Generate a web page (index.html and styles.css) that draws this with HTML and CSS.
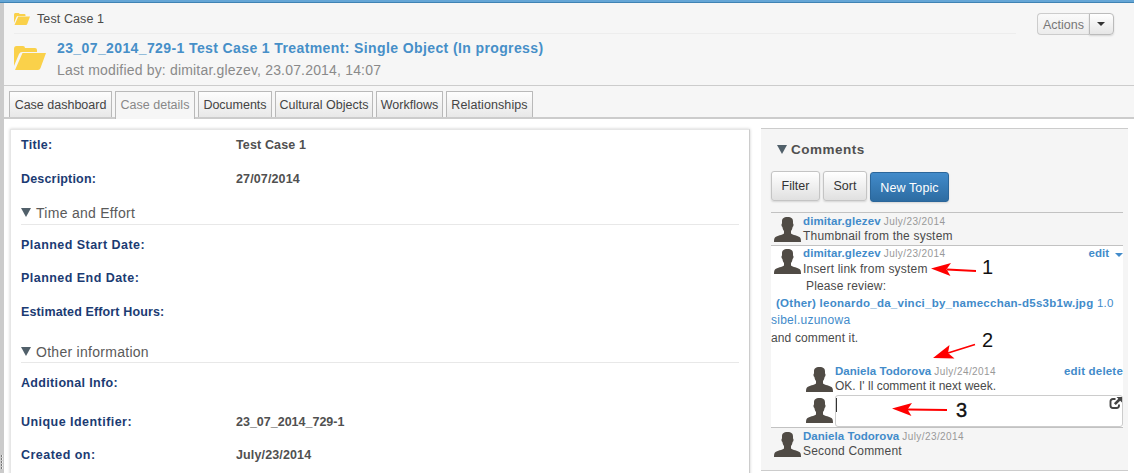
FILE: index.html
```html
<!DOCTYPE html>
<html lang="en"><head><meta charset="utf-8"><title>Test Case 1</title><link rel="stylesheet" href="styles.css"></head>
<body>
<svg class="defs" width="0" height="0"><defs>
<symbol id="person" viewBox="0 0 27 25"><path d="M13.500 0C17.500 0 19 1.500 19 4.500V6.500C19.800 6.800 19.700 9.400 18.600 10 18.300 12 17.700 13.200 17 14V16.500C18.500 18 24 18.700 25.800 20.300 26.700 21.200 27 22.600 27 25H0C0 22.600.300 21.200 1.200 20.300 3 18.700 8.500 18 10 16.500V14C9.300 13.200 8.700 12 8.400 10 7.300 9.400 7.200 6.800 8 6.500V4.500C8 1.500 9.500 0 13.500 0Z" fill="#504b45"/></symbol>
<symbol id="folder" viewBox="0 0 32 24"><path d="M0 20V3q0-3 2.500-3H9q2 0 2 2h10q2 0 2 2v2H8q-2 0-3 2z" fill="#fad14a"/><path d="M8.500 7H32l-5.500 15q-.7 2-2.500 2H1z" fill="#fad14a"/></symbol>
</defs></svg>
<div class="page">
<div class="topbar"></div>
<div class="frame">
<aside class="splitter"><i></i><i></i><i></i><i></i><i></i></aside>
<main class="main">
<header class="header">
<div class="left">
<div class="crumb"><svg class="f-small"><use href="#folder"/></svg><span>Test Case 1</span></div>
<div class="case"><svg class="f-large"><use href="#folder"/></svg><div><h1>23_07_2014_729-1 Test Case 1 Treatment: Single Object (In progress)</h1><p>Last modified by: dimitar.glezev, 23.07.2014, 14:07</p></div></div>
</div>
<div class="actions"><span class="act">Actions</span><span class="drop"><i class="caret"></i></span></div>
</header>
<nav class="tabs"><a class="w1">Case dashboard</a><a class="w2 active">Case details</a><a class="w3">Documents</a><a class="w4">Cultural Objects</a><a class="w5">Workflows</a><a class="w6">Relationships</a></nav>
<div class="content">
<section class="details">
<dl class="row r34"><dt class="s3">Title:</dt><dd class="s1">Test Case 1</dd></dl>
<dl class="row r34"><dt class="s2">Description:</dt><dd class="s1">27/07/2014</dd></dl>
<h2><i class="tri"></i>Time and Effort</h2>
<dl class="row r33 first"><dt class="s4">Planned Start Date:</dt></dl>
<dl class="row r34"><dt class="s4">Planned End Date:</dt></dl>
<dl class="row r33"><dt class="s1">Estimated Effort Hours:</dt></dl>
<h2 class="other"><i class="tri"></i>Other information</h2>
<dl class="row r39 first"><dt class="s3">Additional Info:</dt></dl>
<dl class="row r33"><dt class="s4">Unique Identifier:</dt><dd>23_07_2014_729-1</dd></dl>
<dl class="row r33"><dt class="s4">Created on:</dt><dd class="s1">July/23/2014</dd></dl>
</section>
<section class="comments">
<h3><i class="tri"></i>Comments</h3>
<div class="buttons"><button class="filter">Filter</button><button class="sort">Sort</button><button class="new">New Topic</button></div>
<div class="list">
<article class="comment c1"><svg class="avatar"><use href="#person"/></svg><div class="body"><div class="meta"><b>dimitar.glezev</b><time>July/23/2014</time></div><p>Thumbnail from the system</p></div></article>
<div class="thread">
<article class="comment c2"><svg class="avatar"><use href="#person"/></svg><div class="body"><div class="meta"><b>dimitar.glezev</b><time>July/23/2014</time><span class="links caretlink">edit<i class="caret blue"></i></span></div><p>Insert link from system</p></div></article>
<p class="review">Please review:</p>
<p class="file"><b>(Other) leonardo_da_vinci_by_namecchan-d5s3b1w.jpg</b> 1.0</p>
<p class="user">sibel.uzunowa</p>
<p class="tail">and comment it.</p>
<article class="comment reply"><svg class="avatar"><use href="#person"/></svg><div class="body"><div class="meta"><b>Daniela Todorova</b><time>July/24/2014</time><span class="links wide">edit delete</span></div><p>OK. I' ll comment it next week.</p></div></article>
<div class="compose"><svg class="avatar"><use href="#person"/></svg><div class="input"><i class="cursor"></i><svg class="ext" viewBox="0 0 13 13"><path d="M6.500 2H4Q1.500 2 1.500 4.500V8.500Q1.500 11 4 11H7.500Q10 11 10 8.500V7.500" fill="none" stroke="#444" stroke-width="1.900"/><path d="M7.500 0H13V5.500L11.200 3.700 6.800 8.100 4.900 6.200 9.300 1.800Z" fill="#444"/></svg></div></div>
</div>
<article class="comment c3"><svg class="avatar"><use href="#person"/></svg><div class="body"><div class="meta"><b>Daniela Todorova</b><time>July/23/2014</time></div><p>Second Comment</p></div></article>
</div>
</section>
</div>
</main>
</div>
<svg class="notes" viewBox="0 0 1134 473"><g stroke="#f00" stroke-width="1.800"><path d="M947 269.500L976 271M948 353L975 344.500M907 409.500L947 410"/></g><g fill="#f00"><path d="M931 268.500L951 263 946.500 269.300 950.500 276Z"/><path d="M933 358L949.500 345 948 353 954.500 358.500Z"/><path d="M892 408.500L912 403 907.500 409.500 911.500 416Z"/></g><g class="num"><text x="982" y="274">1</text><text x="982" y="347">2</text><text class="heavy" x="956" y="416.500">3</text></g></svg>
</div>
</body></html>
```
FILE: styles.css
```css
*{box-sizing:border-box}
body,h1,h2,h3,p,dl,dd{margin:0}
body{font-family:"Liberation Sans",Arial,sans-serif;font-size:12px;color:#4a4a4a;background:#fff;overflow:hidden}
i{display:block;flex:none}
.defs{position:absolute}
.page{position:relative;width:1134px;height:473px;overflow:hidden}
.topbar{height:3px;background:#65a6d6;border-bottom:1px solid #3f83b4}
.frame{display:flex;height:470px}
.splitter{width:4px;background:#cbcbcb;display:flex;flex-direction:column;gap:1px;padding:452px 1px 0}
.splitter i{width:2px;height:2px;background:#777;border-right:1px solid #eee}
.main{width:1130px}
.header{height:83px;background:#f6f6f6;border-bottom:1px solid #ccc;display:flex;padding-left:10px}
.left{width:1002px}
.crumb{height:31px;border-bottom:1px solid #ededed;display:flex;align-items:center;gap:7px;font-size:12.5px;letter-spacing:.1px}
.crumb span{margin-top:1px}
.f-small{width:16px;height:12px;margin-top:1px}
.case{display:flex;gap:11px}
.f-large{width:32px;height:24px;margin-top:12px}
h1{font-size:14px;line-height:18px;letter-spacing:.39px;color:#468fc8;margin-top:5px;white-space:nowrap}
.case p{font-size:14px;line-height:18px;letter-spacing:.18px;color:#8a8a8a;margin-top:4px}
.actions{display:flex;margin:10px 0 0 21px;height:22px;color:#777}
.act{width:52px;border:1px solid #ccc;border-right:0;border-radius:4px 0 0 4px;background:linear-gradient(#fafafa,#ececec);font-size:12.5px;line-height:22px;padding-left:5px}
.drop{width:25px;border:1px solid #bbb;border-radius:0 4px 4px 0;background:linear-gradient(#fff,#e6e6e6);padding:8px 0 0 7px;box-shadow:0 1px 2px #0002}
.caret{border:4px solid transparent;border-top-color:#333;border-bottom:0;width:0;height:0}
.tabs{height:33px;background:#f6f6f6;border-bottom:2px solid #ccc;padding:5px 0 0 5px;display:flex;gap:3px}
.tabs a{height:26px;border:1px solid #b9b9b9;border-bottom:0;border-radius:1px 1px 0 0;background:linear-gradient(#fdfdfd,#e8e8e8);font-size:12.500px;line-height:26px;text-align:center;color:#444;white-space:nowrap}
.tabs .active{height:28px;background:#f6f6f6;color:#888}
.w1{width:103px}.w2{width:80px}.w3{width:74px}.w4{width:98px}.w5{width:67px}.w6{width:87px;letter-spacing:.1px}
.content{display:flex;align-items:flex-start;gap:11px;padding:9px 0 0 6px}
.details{width:740px;height:360px;margin-top:1px;border:1px solid #e6e6e6;border-right-color:#ccc;box-shadow:0 0 3px #0003;padding:6px 10px 0 10px}
.row{display:flex;font-size:12.5px;font-weight:bold;line-height:18px;white-space:nowrap}
dt{width:215px;color:#1b3b73}
dd{color:#505050}
.r33{height:33px}.r34{height:34px}.r39{height:39px}
.s1{letter-spacing:.13px}.s2{letter-spacing:.18px}.s3{letter-spacing:.33px}.s4{letter-spacing:.46px}
h2{height:21px;border-bottom:1px solid #e8e8e8;display:flex;gap:5px;font-size:14px;font-weight:normal;line-height:18px;letter-spacing:.28px;color:#5a5a5a}
.first{margin-top:11px}
.other{margin-top:6px;line-height:20px}
.tri{width:10px;height:9px;background:#51606a;clip-path:polygon(0 0,100% 0,50% 100%)}
h2 .tri{margin-top:4px}
h2.other .tri{margin-top:5px}
.comments{width:367px;height:343px;background:#f5f5f5;border-top:1px solid #ccc;border-bottom:1px solid #ccc;padding:11px 5px 0 10px}
h3{height:31px;display:flex;gap:4px;padding-left:6px;font-size:13.5px;line-height:19px;letter-spacing:.5px;color:#505050}
h3 .tri{margin-top:5px}
.buttons{display:flex;height:41px;gap:3px}
button{font:12.5px "Liberation Sans",Arial,sans-serif;height:30px;padding:0;border:1px solid #c4c4c4;border-radius:3px;background:linear-gradient(#fff,#e0e0e0);color:#333;box-shadow:0 1px 2px #0002}
.filter{width:49px}.sort{width:44px}
.new{width:79px;margin-top:1px;padding-top:1px;background:linear-gradient(#428bca,#2d6ca2);border-color:#2b669a;color:#fff;letter-spacing:.1px}
.list{width:352px}
.comment{display:flex;padding-left:3px}
.c1,.thread,.c3{border-top:1px solid #c2c2c2}
.c1{height:33px}
.thread{height:182px;background:#fff}
.avatar{width:27px;height:25px;margin-top:4px;flex:none}
.body{flex:1;padding-left:2px}
.meta{height:16px;line-height:16px;display:flex;white-space:nowrap}
.meta b,.links{font-size:11.5px;color:#428bca}
.c1 .meta b,.c2 .meta b{letter-spacing:.12px}
.c2 .meta{height:15px;line-height:15px}
time{font-size:10px;letter-spacing:.42px;color:#999;margin-left:3px;padding-top:1px}
.c2 time{padding-top:0}
.links{margin-left:auto;font-weight:bold;display:flex}
.links.wide{letter-spacing:.2px}
.caret.blue{border-top-color:#428bca;margin:7px 0 0 6px}
.comment p{line-height:14px;letter-spacing:.2px;white-space:nowrap}
.c2{height:32px}
.c2 p{letter-spacing:.2px;padding-top:1px}
.thread>p{height:17px;line-height:17px;white-space:nowrap}
.thread>.review{padding-left:35px;letter-spacing:.15px}
.thread>.file{padding-left:5px;color:#428bca;font-size:11.5px;letter-spacing:.26px}
.thread>.user{color:#428bca;letter-spacing:.25px}
.thread>.tail{height:19px;line-height:19px;letter-spacing:.13px}
.comment.reply{height:32px;margin-top:15px;padding-left:35px}
.c2 .avatar,.reply .avatar,.compose .avatar{margin-top:3px}
.comment.reply .avatar{margin-top:4px}
.comment.reply p{letter-spacing:0}
.reply .meta b,.c3 .meta b{letter-spacing:.04px}
.compose{display:flex;padding-left:35px}
.input{width:288px;height:32px;margin:0 0 0 2px;border:1px solid #ccc;border-radius:3px;display:flex;justify-content:space-between;background:#fff}
.cursor{width:1px;height:14px;background:#333;margin:2px 0 0}
.ext{width:13px;height:13px;margin-top:1px}
.notes{position:absolute;left:0;top:0;width:1134px;height:473px;pointer-events:none}
.num{font:20px "Liberation Sans",Arial,sans-serif;fill:#111}
.heavy{stroke:#111;stroke-width:.4px}
```
